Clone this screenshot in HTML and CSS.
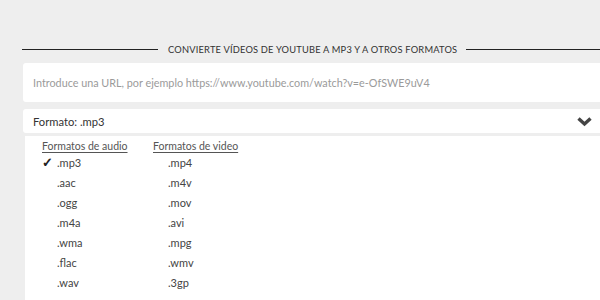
FILE: index.html
```html
<!DOCTYPE html>
<html lang="es">
<head>
<meta charset="utf-8">
<link rel="stylesheet" href="styles.css">
</head>
<body>
<div class="page">
  <div class="title-row">
    <span class="rule rule-left"></span>
    <h1 class="title">CONVIERTE VÍDEOS DE YOUTUBE A MP3 Y A OTROS FORMATOS</h1>
    <span class="rule rule-right"></span>
  </div>
  <div class="url-box">
    <span class="placeholder">Introduce una URL, por ejemplo https://www.youtube.com/watch?v=e-OfSWE9uV4</span>
  </div>
  <div class="format-bar">
    <span class="format-label">Formato: .mp3</span>
    <svg class="chevron" width="15" height="11" viewBox="0 0 15 11"><path d="M1.5 2.5 L7.5 8 L13.5 2.5" fill="none" stroke="#444" stroke-width="3.4" stroke-linejoin="miter"/></svg>
  </div>
  <div class="panel">
    <div class="col col-audio">
      <div class="col-head">Formatos de audio</div>
      <div class="item selected"><span class="check">✓</span>.mp3</div>
      <div class="item">.aac</div>
      <div class="item">.ogg</div>
      <div class="item">.m4a</div>
      <div class="item">.wma</div>
      <div class="item">.flac</div>
      <div class="item">.wav</div>
    </div>
    <div class="col col-video">
      <div class="col-head">Formatos de video</div>
      <div class="item">.mp4</div>
      <div class="item">.m4v</div>
      <div class="item">.mov</div>
      <div class="item">.avi</div>
      <div class="item">.mpg</div>
      <div class="item">.wmv</div>
      <div class="item">.3gp</div>
    </div>
  </div>
</div>
</body>
</html>
```
FILE: styles.css
```css
html, body {
  margin: 0;
  padding: 0;
  background: #eeeeee;
  overflow: hidden;
}
body {
  font-family: Lato, "Open Sans", sans-serif;
  color: #333;
}
.page {
  padding: 42px 0 0 22px;
  width: 578px;
}
.title-row {
  display: flex;
  align-items: center;
  height: 14px;
}
.rule {
  height: 1px;
  background: #222;
  display: block;
}
.rule-left {
  width: 136px;
}
.rule-right {
  flex: 1;
}
.title {
  margin: 0 9px 0 10px;
  font-size: 9.3px;
  font-weight: 400;
  letter-spacing: 0.2px;
  color: #333;
  white-space: nowrap;
}
.url-box {
  margin-top: 7px;
  margin-left: 1px;
  height: 39px;
  background: #fff;
  border-radius: 3px 0 0 3px;
  display: flex;
  align-items: center;
  padding-left: 10px;
}
.placeholder {
  font-size: 10.8px;
  color: #9a9a9a;
  white-space: nowrap;
}
.format-bar {
  margin-top: 7px;
  margin-left: 1px;
  height: 24px;
  background: #fff;
  border-radius: 3px 0 0 3px;
  display: flex;
  align-items: center;
  padding-left: 10px;
  padding-right: 8px;
}
.format-label {
  font-size: 11.2px;
  color: #333;
  flex: 1;
}
.chevron {
  display: block;
  margin-top: 1px;
}
.panel {
  margin-top: 3px;
  margin-left: 3px;
  background: #fff;
  display: flex;
  padding: 4px 0 0 17px;
  height: 170px;
}
.col-audio {
  width: 111px;
}
.col-head {
  font-size: 10.5px;
  color: #555;
  text-decoration: underline;
  text-underline-offset: 2px;
  height: 14px;
  margin-bottom: 2px;
}
.item {
  font-size: 11px;
  color: #444;
  height: 20px;
  line-height: 14px;
  padding-left: 15px;
  position: relative;
}
.check {
  position: absolute;
  left: 0;
  top: -1px;
  font-size: 13px;
  font-weight: 700;
  color: #222;
}
```
